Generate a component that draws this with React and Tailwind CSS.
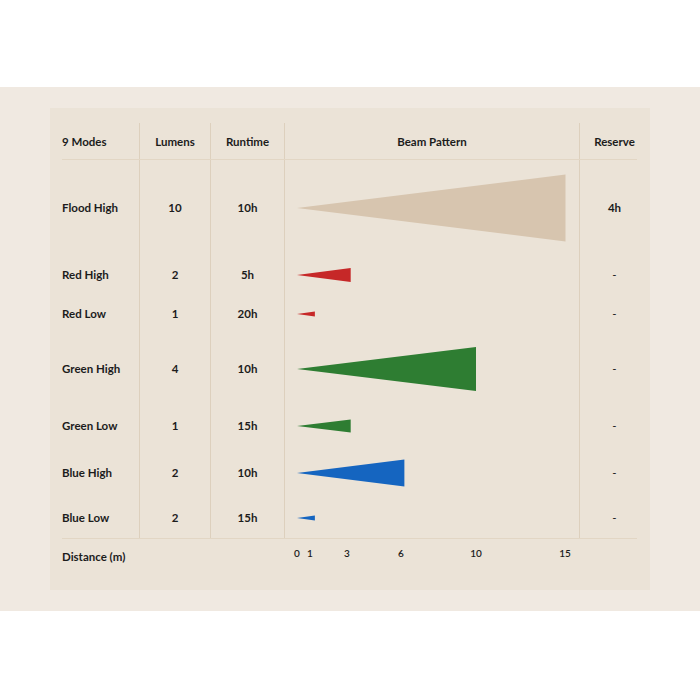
import React from "react";

const PX_PER_M = 17.9;
const APEX = 12;

const modes = [
  { name: "Flood High", lumens: "10", runtime: "10h", reserve: "4h", dist: 15, spread: 67, color: "#d7c5af", h: 96 },
  { name: "Red High", lumens: "2", runtime: "5h", reserve: "-", dist: 3, spread: 14, color: "#c62828", h: 38 },
  { name: "Red Low", lumens: "1", runtime: "20h", reserve: "-", dist: 1, spread: 5, color: "#c62828", h: 40 },
  { name: "Green High", lumens: "4", runtime: "10h", reserve: "-", dist: 10, spread: 44, color: "#2e7d32", h: 70 },
  { name: "Green Low", lumens: "1", runtime: "15h", reserve: "-", dist: 3, spread: 13, color: "#2e7d32", h: 44 },
  { name: "Blue High", lumens: "2", runtime: "10h", reserve: "-", dist: 6, spread: 27, color: "#1565c0", h: 50 },
  { name: "Blue Low", lumens: "2", runtime: "15h", reserve: "-", dist: 1, spread: 5, color: "#1565c0", h: 40 },
];

const ticks = [
  { label: "0", x: 13 },
  { label: "1", x: 26 },
  { label: "3", x: 63 },
  { label: "6", x: 117 },
  { label: "10", x: 192 },
  { label: "15", x: 281 },
];

const Beam = ({ mode }) => {
  const mid = mode.h / 2;
  const end = APEX + mode.dist * PX_PER_M;
  const half = mode.spread / 2;
  return (
    <svg width="295" height={mode.h} className="block">
      <polygon
        points={`${APEX},${mid} ${end},${mid - half} ${end},${mid + half}`}
        fill={mode.color}
      />
    </svg>
  );
};

const App = () => {
  return (
    <div
      className="w-[700px] h-[700px] bg-white pt-[87px]"
      style={{ fontFamily: "Lato, 'Liberation Sans', sans-serif" }}
    >
      <div className="bg-[#f0e9e1] h-[524px] pt-[21px] pl-[50px]">
        <div className="w-[600px] h-[482px] bg-[#ebe3d7] pt-[14px] pl-[12px] text-[11.5px] font-bold text-[#1c1c1c]">
          {/* Header */}
          <div className="grid grid-cols-[77px_71px_74px_295px_70px] h-[38px] items-center pt-px">
            <div>9 Modes</div>
            <div className="h-full flex items-center justify-center border-l border-[#ddd0bd]">Lumens</div>
            <div className="h-full flex items-center justify-center border-l border-[#ddd0bd]">Runtime</div>
            <div className="h-full flex items-center justify-center border-l border-[#ddd0bd]">Beam Pattern</div>
            <div className="h-full flex items-center justify-center border-l border-[#ddd0bd]">Reserve</div>
          </div>
          <div className="relative h-0">
            <div className="absolute left-0 top-[-1px] w-[575px] h-px bg-[#e2d6c4]" />
          </div>

          {/* Rows */}
          {modes.map((m) => (
            <div
              key={m.name}
              className="grid grid-cols-[77px_71px_74px_295px_70px] items-center"
              style={{ height: m.h }}
            >
              <div>{m.name}</div>
              <div className="h-full flex items-center justify-center border-l border-[#ddd0bd]">{m.lumens}</div>
              <div className="h-full flex items-center justify-center border-l border-[#ddd0bd]">{m.runtime}</div>
              <div className="h-full border-l border-[#ddd0bd]">
                <Beam mode={m} />
              </div>
              <div className="h-full flex items-center justify-center border-l border-[#ddd0bd] font-normal">
                {m.reserve === "-" ? "-" : <span className="font-bold">{m.reserve}</span>}
              </div>
            </div>
          ))}

          {/* Footer */}
          <div className="w-[575px] h-px bg-[#e2d6c4]" />
          <div className="grid grid-cols-[222px_295px] items-start pt-[8px]">
            <div className="leading-[18px] pt-px">Distance (m)</div>
            <svg width="295" height="24" className="block text-[10px] font-semibold">
              {ticks.map((t) => (
                <text
                  key={t.label}
                  x={t.x}
                  y="10"
                  textAnchor="middle"
                  fill="#1c1c1c"
                  style={{ fontFamily: "Lato, 'Liberation Sans', sans-serif" }}
                >
                  {t.label}
                </text>
              ))}
            </svg>
          </div>
        </div>
      </div>
    </div>
  );
};

export default App;
